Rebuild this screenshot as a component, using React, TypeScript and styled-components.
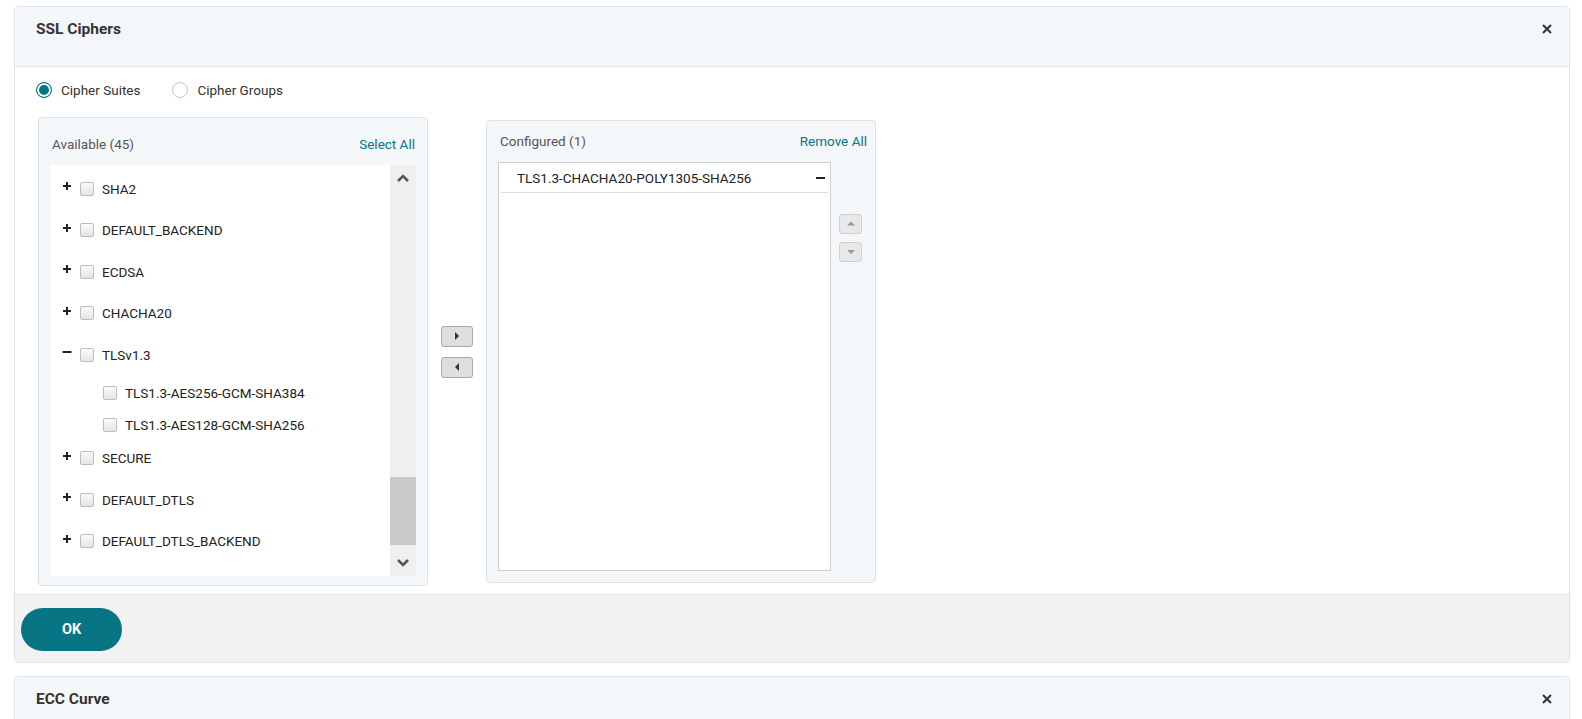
import React from "react";
import styled, { createGlobalStyle } from "styled-components";

const GlobalStyle = createGlobalStyle`
  html, body {
    margin: 0;
    overflow: hidden;
    background: #ffffff;
    font-family: Roboto, "Liberation Sans", Arial, sans-serif;
    color: #333;
  }
  * { box-sizing: border-box; }
`;

const teal = "#087584";

const Page = styled.div`
  padding: 6px 12px 0 14px;
  display: flex;
  flex-direction: column;
  gap: 13px;
  height: 719px;
  overflow: hidden;
`;

const Panel = styled.section`
  border: 1px solid #e1e5ea;
  border-radius: 4px;
  background: #fff;
  flex-shrink: 0;
`;

const PanelHeader = styled.header`
  height: 60px;
  background: #f4f7fa;
  border-bottom: 1px solid #e3e7ec;
  display: flex;
  justify-content: space-between;
  align-items: flex-start;
  padding: 12px 17px 0 21px;
  border-radius: 4px 4px 0 0;
`;

const PanelTitle = styled.h2`
  margin: 0;
  font-size: 15.5px;
  font-weight: 700;
  color: #333;
  line-height: 20px;
`;

const CloseBtn = styled.button`
  border: 0;
  background: none;
  padding: 0;
  margin-top: 5px;
  width: 10px;
  height: 10px;
  display: flex;
  align-items: center;
  justify-content: center;
  cursor: pointer;
`;

const PanelBody = styled.div`
  padding: 11px 24px 8px 23px;
`;

const RadioRow = styled.div`
  display: flex;
  align-items: center;
  gap: 32px;
  height: 24px;
  margin: 0 0 15px -2px;
`;

const RadioLabel = styled.label`
  display: flex;
  align-items: center;
  gap: 9px;
  font-size: 13.5px;
  color: #333;
`;

const RadioDot = styled.span<{ $on?: boolean }>`
  width: 16px;
  height: 16px;
  border-radius: 50%;
  border: 1px solid ${(p) => (p.$on ? teal : "#c4c4c4")};
  background: ${(p) => (p.$on ? teal : "#fff")};
  box-shadow: ${(p) => (p.$on ? "inset 0 0 0 2px #fff" : "none")};
  display: inline-block;
`;

const Columns = styled.div`
  display: flex;
  align-items: center;
`;

const Box = styled.div<{ $h: number }>`
  width: 390px;
  height: ${(p) => p.$h}px;
  flex-shrink: 0;
  background: #f4f7fa;
  border: 1px solid #dde2e8;
  border-radius: 4px;
  padding: 0 11px;
  display: flex;
  flex-direction: column;
`;

const BoxHead = styled.div<{ $top: number; $right: number }>`
  display: flex;
  justify-content: space-between;
  align-items: center;
  font-size: 13.5px;
  height: 20px;
  margin: ${(p) => p.$top}px ${(p) => p.$right}px 11px 0;
  padding-left: 2px;
`;

const BoxTitle = styled.span`
  color: #555;
`;

const LinkBtn = styled.a`
  color: ${teal};
  font-size: 13.5px;
  cursor: pointer;
`;

const ListArea = styled.div`
  flex: 1;
  margin-bottom: 9px;
  background: #fff;
  display: flex;
  overflow: hidden;
`;

const TreeList = styled.div`
  flex: 1;
  overflow: hidden;
  padding-top: 1px;
`;

const Row = styled.div`
  height: 41.5px;
  padding: 4px 0 0 9px;
  display: flex;
  align-items: center;
  font-size: 13.5px;
  color: #222;
`;

const ChildGroup = styled.div`
  margin: 3px 0 -6px 0;
`;

const ChildRow = styled.div`
  height: 32.5px;
  padding-left: 53px;
  display: flex;
  align-items: center;
  gap: 8px;
  font-size: 13.5px;
  color: #222;
`;

const Expander = styled.span`
  width: 16px;
  height: 16px;
  display: flex;
  align-items: center;
  justify-content: center;
  margin-right: 5px;
  margin-top: -5px;
`;

const Check = styled.span`
  width: 14px;
  height: 14px;
  border: 1px solid #bdbdbd;
  border-radius: 2px;
  background: linear-gradient(#fbfbfb, #e4e4e4);
  display: inline-block;
  flex-shrink: 0;
`;

const RowLabel = styled.span`
  margin-left: 8px;
`;

const Scrollbar = styled.div`
  width: 26px;
  background: #efefef;
  display: flex;
  flex-direction: column;
  align-items: center;
`;

const ScrollArrow = styled.div`
  height: 26px;
  display: flex;
  align-items: center;
  justify-content: center;
  width: 100%;
`;

const ScrollTrack = styled.div`
  flex: 1;
  width: 100%;
  padding-top: 286px;
`;

const Thumb = styled.div`
  height: 68px;
  background: #c9c9c9;
  width: 100%;
`;

const MiddleCol = styled.div`
  width: 58px;
  flex-shrink: 0;
  display: flex;
  flex-direction: column;
  align-items: center;
  gap: 10px;
`;

const MoveBtn = styled.button`
  width: 32px;
  height: 21px;
  border: 1px solid #a9a9a9;
  border-radius: 3px;
  background: #dedede;
  padding: 0;
  display: flex;
  align-items: center;
  justify-content: center;
`;

const ConfiguredList = styled.div`
  flex: 1;
  background: #fff;
  border: 1px solid #cfcfcf;
  padding: 0 2px;
`;

const ConfRow = styled.div`
  height: 30px;
  border-bottom: 1px solid #dcdcdc;
  display: flex;
  justify-content: space-between;
  align-items: center;
  padding: 0 3px 0 16px;
  font-size: 13.5px;
  color: #222;
`;

const Dash = styled.span`
  width: 9px;
  height: 2px;
  background: #222;
  display: inline-block;
`;

const ConfArea = styled.div`
  flex: 1;
  display: flex;
  margin-bottom: 11px;
`;

const OrderCol = styled.div`
  width: 33px;
  display: flex;
  flex-direction: column;
  align-items: flex-start;
  padding: 52px 0 0 8px;
  gap: 8px;
`;

const OrderBtn = styled.button`
  width: 23px;
  height: 20px;
  border: 1px solid #d0d0d0;
  border-radius: 3px;
  background: #e8e8e8;
  padding: 0;
  display: flex;
  align-items: center;
  justify-content: center;
`;

const Footer = styled.footer`
  height: 68px;
  background: #f2f2f2;
  border-top: 1px solid #e2e2e2;
  padding: 13px 6px;
  border-radius: 0 0 4px 4px;
`;

const OkButton = styled.button`
  width: 101px;
  height: 43px;
  border-radius: 22px;
  border: 0;
  background: ${teal};
  color: #fff;
  font-family: inherit;
  font-weight: 700;
  font-size: 14.5px;
  cursor: pointer;
`;

const XIcon = () => (
  <svg width="10" height="10" viewBox="0 0 10 10">
    <path d="M1 1 L9 9 M9 1 L1 9" stroke="#333" strokeWidth="2" />
  </svg>
);

const PlusMinus = ({ open }: { open?: boolean }) => (
  <svg width="10" height="10" viewBox="0 0 10 10">
    <path d={open ? "M0.5 5 H9.5" : "M1 5 H9 M5 1 V9"} stroke="#222" strokeWidth="2" />
  </svg>
);

const Chevron = ({ up }: { up?: boolean }) => (
  <svg width="14" height="10" viewBox="0 0 14 10">
    <path
      d={up ? "M2 8 L7 3 L12 8" : "M2 2 L7 7 L12 2"}
      stroke="#555"
      strokeWidth="2.6"
      fill="none"
    />
  </svg>
);

const Tri = ({ dir, color }: { dir: "up" | "down" | "left" | "right"; color: string }) => {
  const d = {
    up: "M1 6.5 L5 2.5 L9 6.5 Z",
    down: "M1 3 L5 7 L9 3 Z",
    right: "M3 1 L7 5 L3 9 Z",
    left: "M7 1 L3 5 L7 9 Z",
  }[dir];
  return (
    <svg width="10" height="10" viewBox="0 0 10 10">
      <path d={d} fill={color} />
    </svg>
  );
};

type Group = { name: string; open?: boolean; children?: string[] };

const groups: Group[] = [
  { name: "SHA2" },
  { name: "DEFAULT_BACKEND" },
  { name: "ECDSA" },
  { name: "CHACHA20" },
  { name: "TLSv1.3", open: true, children: ["TLS1.3-AES256-GCM-SHA384", "TLS1.3-AES128-GCM-SHA256"] },
  { name: "SECURE" },
  { name: "DEFAULT_DTLS" },
  { name: "DEFAULT_DTLS_BACKEND" },
  { name: "HIGH" },
];

export default function App() {
  return (
    <>
      <GlobalStyle />
      <Page>
        <Panel>
          <PanelHeader>
            <PanelTitle>SSL Ciphers</PanelTitle>
            <CloseBtn aria-label="close">
              <XIcon />
            </CloseBtn>
          </PanelHeader>
          <PanelBody>
            <RadioRow>
              <RadioLabel>
                <RadioDot $on />
                Cipher Suites
              </RadioLabel>
              <RadioLabel>
                <RadioDot />
                Cipher Groups
              </RadioLabel>
            </RadioRow>
            <Columns>
              <Box $h={469}>
                <BoxHead $top={16} $right={1}>
                  <BoxTitle>Available (45)</BoxTitle>
                  <LinkBtn>Select All</LinkBtn>
                </BoxHead>
                <ListArea>
                  <TreeList>
                    {groups.map((g) => (
                      <React.Fragment key={g.name}>
                        <Row>
                          <Expander>
                            <PlusMinus open={g.open} />
                          </Expander>
                          <Check />
                          <RowLabel>{g.name}</RowLabel>
                        </Row>
                        {g.open && (
                          <ChildGroup>
                            {g.children!.map((c) => (
                              <ChildRow key={c}>
                                <Check />
                                {c}
                              </ChildRow>
                            ))}
                          </ChildGroup>
                        )}
                      </React.Fragment>
                    ))}
                  </TreeList>
                  <Scrollbar>
                    <ScrollArrow>
                      <Chevron up />
                    </ScrollArrow>
                    <ScrollTrack>
                      <Thumb />
                    </ScrollTrack>
                    <ScrollArrow>
                      <Chevron />
                    </ScrollArrow>
                  </Scrollbar>
                </ListArea>
              </Box>
              <MiddleCol>
                <MoveBtn aria-label="add">
                  <Tri dir="right" color="#333" />
                </MoveBtn>
                <MoveBtn aria-label="remove">
                  <Tri dir="left" color="#333" />
                </MoveBtn>
              </MiddleCol>
              <Box $h={463}>
                <BoxHead $top={10} $right={-3}>
                  <BoxTitle>Configured (1)</BoxTitle>
                  <LinkBtn>Remove All</LinkBtn>
                </BoxHead>
                <ConfArea>
                  <ConfiguredList>
                    <ConfRow>
                      <span>TLS1.3-CHACHA20-POLY1305-SHA256</span>
                      <Dash />
                    </ConfRow>
                  </ConfiguredList>
                  <OrderCol>
                    <OrderBtn aria-label="up">
                      <Tri dir="up" color="#999" />
                    </OrderBtn>
                    <OrderBtn aria-label="down">
                      <Tri dir="down" color="#999" />
                    </OrderBtn>
                  </OrderCol>
                </ConfArea>
              </Box>
            </Columns>
          </PanelBody>
          <Footer>
            <OkButton>OK</OkButton>
          </Footer>
        </Panel>
        <Panel>
          <PanelHeader>
            <PanelTitle>ECC Curve</PanelTitle>
            <CloseBtn aria-label="close">
              <XIcon />
            </CloseBtn>
          </PanelHeader>
        </Panel>
      </Page>
    </>
  );
}
